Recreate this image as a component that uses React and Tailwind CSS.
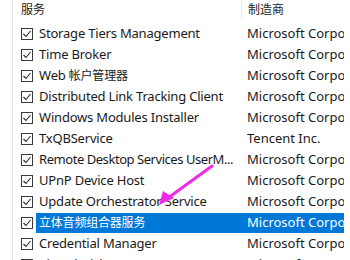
const services = [
  { name: 'Storage Tiers Management', vendor: 'Microsoft Corporation' },
  { name: 'Time Broker', vendor: 'Microsoft Corporation' },
  { name: 'Web 帐户管理器', vendor: 'Microsoft Corporation' },
  { name: 'Distributed Link Tracking Client', vendor: 'Microsoft Corporation' },
  { name: 'Windows Modules Installer', vendor: 'Microsoft Corporation' },
  { name: 'TxQBService', vendor: 'Tencent Inc.' },
  { name: 'Remote Desktop Services UserM...', vendor: 'Microsoft Corporation', tight: true },
  { name: 'UPnP Device Host', vendor: 'Microsoft Corporation' },
  { name: 'Update Orchestrator Service', vendor: 'Microsoft Corporation' },
  { name: '立体音频组合器服务', vendor: 'Microsoft Corporation', selected: true },
  { name: 'Credential Manager', vendor: 'Microsoft Corporation' },
  { name: 'Virtual Disk', vendor: 'Microsoft Corporation' },
];

// 中文字符用小一号字，贴近原图
function Label({ text }) {
  const parts = text.split(/([\u4e00-\u9fff]+)/).filter(Boolean);
  return parts.map((p, i) =>
    /[\u4e00-\u9fff]/.test(p) ? (
      <span key={i} className="text-[12px]">{p}</span>
    ) : (
      <span key={i}>{p}</span>
    )
  );
}

function Checkbox() {
  return (
    <svg width="12" height="12" viewBox="0 0 12 12" className="shrink-0">
      <rect x="0.5" y="0.5" width="11" height="11" fill="#fff" stroke="#3a3a3a" />
      <path d="M2.5 6 L5 8.5 L9.5 3" fill="none" stroke="#2a2a2a" strokeWidth="1.1" />
    </svg>
  );
}

export default function App() {
  return (
    <div
      className="relative w-[350px] h-[260px] overflow-hidden bg-white text-[13px] text-[#1a1a1a]"
      style={{ fontFamily: '"Noto Sans", "Noto Sans CJK SC", sans-serif' }}
    >
      <div className="ml-[12px] border-l border-[#e3e3e3] h-full">
        {/* 表头 */}
        <div className="flex h-[23px] items-start">
          <div className="w-[228px] pl-[8px] pt-[4px] text-[12px] text-[#222] leading-none">服务</div>
          <div className="h-[21px] border-l border-[#ececec] pl-[6px] pt-[4px] text-[12px] text-[#222] leading-none">制造商</div>
        </div>

        {/* 服务列表 */}
        {services.map((s, i) => (
          <div key={i} className="flex h-[21px] items-center">
            <div className="pl-[8px] pr-[3px] flex items-center">
              <Checkbox />
            </div>
            <div
              className={`w-[208px] h-[20px] pl-[3px] flex items-center whitespace-nowrap overflow-hidden ${
                s.selected ? 'bg-[#0078d7] text-white' : ''
              }`}
            >
              <span className={s.tight ? 'tracking-[-0.45px]' : 'tracking-[-0.2px]'}>
                <Label text={s.name} />
              </span>
            </div>
            <div
              className={`w-[100px] h-[20px] pl-[3px] flex items-center whitespace-nowrap overflow-hidden ${
                s.selected ? 'bg-[#0078d7] text-white' : ''
              }`}
            >
              <span>{s.vendor}</span>
            </div>
          </div>
        ))}
      </div>

      {/* 箭头标注 */}
      <svg className="absolute left-0 top-0" width="350" height="260">
        <line x1="212" y1="166" x2="168" y2="198" stroke="#ee2be6" strokeWidth="3" strokeLinecap="round" />
        <polygon points="159,205 163,191 174,198" fill="#ee2be6" />
      </svg>
    </div>
  );
}
